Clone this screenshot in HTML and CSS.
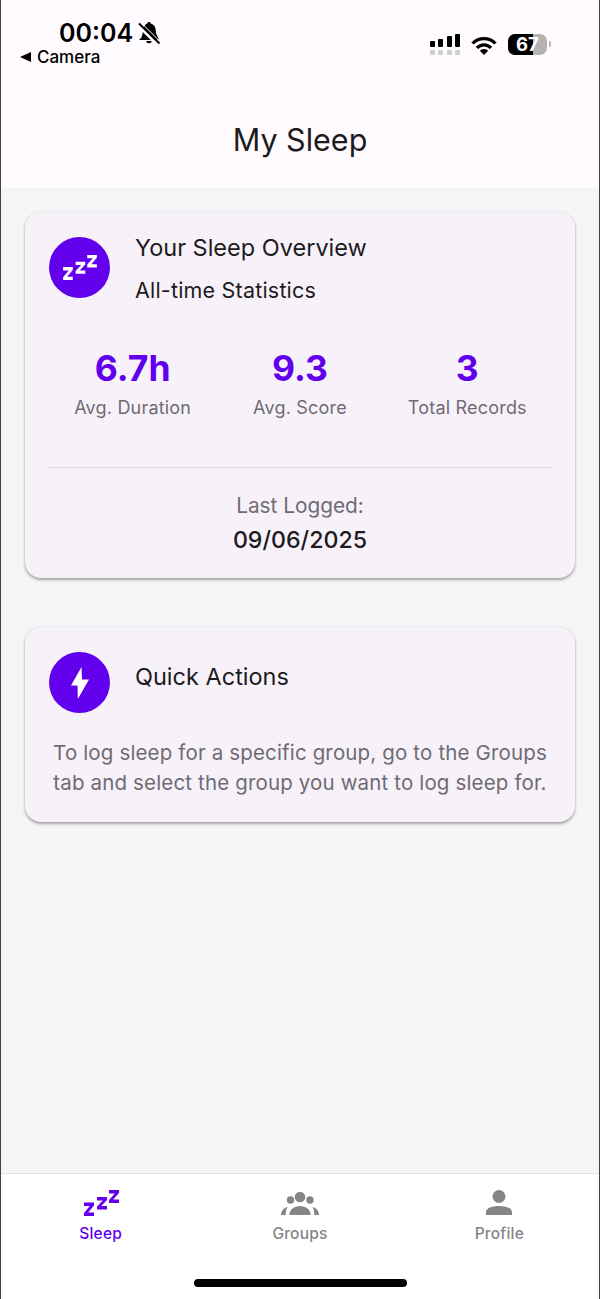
FILE: index.html
```html
<!DOCTYPE html>
<html lang="en">
<head>
<meta charset="utf-8">
<title>My Sleep</title>
<link rel="stylesheet" href="styles.css">
</head>
<body>
<div class="app">
  <header class="header">
    <div class="status">
      <div class="status-left">
        <div class="clock-row">
          <span class="clock">00:04</span>
          <svg class="bell" viewBox="0 0 24 24" width="24" height="24"><path fill="#000" d="M12 1c1 0 1.700.7 1.800 1.600 3 .8 4.700 3.200 4.900 6.400l.2 3 3 6.500H17L6.600 7.500c.5-2.400 1.900-4.400 3.600-4.900.1-.9.8-1.600 1.800-1.600zM5.700 11l8 8H2.200c.9-1 3.200-2.600 3.500-8zM9.200 20h5.600c-.3 1.400-1.400 2.300-2.800 2.300S9.500 21.400 9.200 20z"/><path stroke="#fffbfe" stroke-width="1" d="M3.500 1l20 20"/><path stroke="#000" stroke-width="2" d="M2 2.500l20.500 20"/></svg>
        </div>
        <div class="back-row"><span class="back-tri"></span><span class="back-label">Camera</span></div>
      </div>
      <div class="status-right">
        <div class="signal">
          <div class="bars"><i class="b1"></i><i class="b2"></i><i class="b3"></i><i class="b4"></i></div>
          <div class="dots"><i></i><i></i><i></i><i></i></div>
        </div>
        <svg class="wifi" viewBox="0 0 26 18" width="26" height="18"><g fill="none" stroke="#000" stroke-width="3.200"><path d="M1.500 6.500a16 16 0 0 1 23 0"/><path d="M6 11a9.500 9.500 0 0 1 14 0"/></g><path d="M13 18l-4.200-4.200a5.800 5.800 0 0 1 8.400 0z" fill="#000"/></svg>
        <div class="battery"><div class="battery-fill"></div><span class="battery-num">67</span></div>
        <span class="battery-cap"></span>
      </div>
    </div>
    <h1 class="title">My Sleep</h1>
  </header>

  <main class="main">
    <section class="card card-overview">
      <div class="card-head">
        <div class="avatar">
          <svg viewBox="0 0 38 28" width="37" height="27" fill="#fff"><path d="M2 13.500h10v3l-5.800 7h5.800v3.500H2v-3l5.800-7H2z"/><path d="M15 8h10v3l-5.800 6h5.800v3.500H15v-3l5.800-6H15z"/><path d="M27 1h10v3l-5.800 6.500h5.800V14H27v-3l5.800-6.500H27z"/></svg>
        </div>
        <div class="head-text">
          <h2 class="card-title">Your Sleep Overview</h2>
          <p class="card-sub">All-time Statistics</p>
        </div>
      </div>
      <div class="stats">
        <div class="stat"><div class="stat-value">6.7h</div><div class="stat-label">Avg. Duration</div></div>
        <div class="stat"><div class="stat-value">9.3</div><div class="stat-label">Avg. Score</div></div>
        <div class="stat"><div class="stat-value">3</div><div class="stat-label">Total Records</div></div>
      </div>
      <div class="last">
        <div class="last-label">Last Logged:</div>
        <div class="last-date">09/06/2025</div>
      </div>
    </section>

    <section class="card card-actions">
      <div class="card-head">
        <div class="avatar">
          <svg viewBox="0 0 20 34" width="20" height="34"><path fill="#fff" d="M11.500 1 1 19.500h6.500L7.800 33 19 13.500h-7z"/></svg>
        </div>
        <div class="head-text">
          <h2 class="card-title actions-title">Quick Actions</h2>
        </div>
      </div>
      <p class="actions-text">To log sleep for a specific group, go to the Groups tab and select the group you want to log sleep for.</p>
    </section>
  </main>

  <nav class="tabbar">
    <div class="tabs">
      <div class="tab tab-active">
        <svg viewBox="0 0 38 28" width="38" height="28" fill="#6200ee"><path d="M2 13.500h10v3l-5.800 7h5.800v3.500H2v-3l5.800-7H2z"/><path d="M15 8h10v3l-5.800 6h5.800v3.500H15v-3l5.800-6H15z"/><path d="M27 1h10v3l-5.800 6.500h5.800V14H27v-3l5.800-6.500H27z"/></svg>
        <span class="tab-label">Sleep</span>
      </div>
      <div class="tab">
        <svg viewBox="0 0 38 28" width="38" height="28" fill="#858585"><circle cx="19" cy="8" r="5.300"/><circle cx="9.500" cy="11" r="3.700"/><circle cx="29" cy="11" r="3.700"/><path d="M8.500 26c0-5.500 4.500-9 10.500-9s10.500 3.500 10.500 9z"/><path d="M0 26c0-4 2.500-7 6.500-8-1.200 2-1.800 4.800-1.800 8zM38 26c0-4-2.500-7-6.500-8 1.200 2 1.800 4.800 1.800 8z"/></svg>
        <span class="tab-label">Groups</span>
      </div>
      <div class="tab">
        <svg viewBox="0 0 38 28" width="38" height="28" fill="#858585"><circle cx="19" cy="7.500" r="6.500"/><path d="M6 26v-3c0-4 6-6 13-6s13 2 13 6v3z"/></svg>
        <span class="tab-label">Profile</span>
      </div>
    </div>
    <div class="home-bar"></div>
  </nav>
</div>
</body>
</html>
```

FILE: styles.css
```css
* { box-sizing: border-box; }
html, body { margin: 0; padding: 0; }
body { width: 600px; height: 1299px; overflow: hidden; font-family: Inter, "Liberation Sans", sans-serif; color: #1d1b20; background: #fff; }
h1, h2, p { margin: 0; font-weight: 400; }
.app { width: 600px; height: 1299px; display: flex; flex-direction: column; border-left: 1px solid #444; border-right: 1px solid #444; }

.header { height: 188px; background: #fffbfe; display: flex; flex-direction: column; flex: none; }
.status { height: 76px; display: flex; justify-content: space-between; padding: 19px 48px 0 19px; color: #000; }
.status-left { display: flex; flex-direction: column; }
.clock-row { display: flex; align-items: center; gap: 4px; padding-left: 39px; height: 28px; }
.clock { font-size: 25px; font-weight: 600; line-height: 28px; }
.back-row { display: flex; align-items: center; gap: 6px; height: 20px; }
.back-tri { width: 0; height: 0; border-style: solid; border-width: 5.500px 11px 5.500px 0; border-color: transparent #000 transparent transparent; }
.back-label { font-size: 17px; font-weight: 500; line-height: 20px; }
.status-right { display: flex; align-items: flex-start; padding-top: 15px; }
.signal { display: flex; flex-direction: column; gap: 3px; width: 30px; margin-right: 11px; }
.bars, .dots { display: flex; gap: 3.300px; align-items: flex-end; }
.bars i { display: block; width: 5px; background: #000; border-radius: 1px; }
.b1 { height: 6px; } .b2 { height: 8px; } .b3 { height: 11px; } .b4 { height: 13px; }
.dots i { display: block; width: 5px; height: 5px; background: #cfcfcf; border-radius: 1px; }
.wifi { margin: 3px 11px 0 0; }
.battery { width: 39px; height: 21px; border-radius: 7px; background: #b3b3b3; display: flex; align-items: center; justify-content: center; position: relative; }
.battery-fill { position: absolute; left: 0; top: 0; bottom: 0; width: 25px; background: #000; border-radius: 7px 0 0 7px; }
.battery-num { position: relative; color: #fff; font-size: 18.500px; font-weight: 700; line-height: 21px; }
.battery-cap { width: 2px; height: 6px; margin: 7px 0 0 2px; background: #b3b3b3; border-radius: 0 2px 2px 0; }
.title { font-size: 30.500px; line-height: 38px; text-align: center; margin-top: 45px; color: #1d1b20; }

.main { flex: 1; background: #f5f5f5; padding: 24px 24px 0; display: flex; flex-direction: column; gap: 49px; }
.card { background: #f7f2fa; border-radius: 16px; box-shadow: 0 2px 3px rgba(0,0,0,.32), 0 0 2px rgba(0,0,0,.1); padding: 25px 24px; }
.card-overview { height: 366px; }
.card-actions { height: 195px; }
.card-head { display: flex; gap: 25px; }
.avatar { width: 61px; height: 61px; border-radius: 50%; background: #6200ee; display: flex; align-items: center; justify-content: center; flex: none; }
.card-title { font-size: 23.500px; line-height: 28px; color: #1d1b20; margin-top: -3px; }
.actions-title { margin-top: 11px; }
.card-sub { font-size: 21.500px; line-height: 26px; margin-top: 15px; letter-spacing: .2px; }
.stats { display: flex; justify-content: space-between; margin: 45px 0 0; }
.stat { flex: 1; text-align: center; }
.stat-value { font-size: 35.500px; font-weight: 700; line-height: 42px; color: #6200ee; }
.stat-label { font-size: 18px; line-height: 24px; color: #6f6b73; margin-top: 6px; letter-spacing: .2px; }
.last { margin-top: 47px; border-top: 1px solid #dcd8df; padding-top: 25px; text-align: center; }
.last-label { font-size: 20.800px; line-height: 26px; color: #6f6b73; }
.last-date { font-size: 23.200px; line-height: 30px; margin-top: 6px; font-weight: 500; }
.actions-text { font-size: 20.500px; line-height: 30px; color: #6f6b73; text-align: center; margin-top: 25px; letter-spacing: .15px; }

.tabbar { height: 126px; background: #fff; border-top: 1px solid #e3e3e3; flex: none; display: flex; flex-direction: column; align-items: center; }
.tabs { display: flex; width: 100%; padding-top: 15px; }
.tab { flex: 1; display: flex; flex-direction: column; align-items: center; gap: 7px; color: #858585; }
.tab-active { color: #6200ee; }
.tab-label { font-size: 15.500px; font-weight: 500; line-height: 20px; letter-spacing: .2px; }
.home-bar { width: 213px; height: 8px; background: #000; border-radius: 4px; margin-top: 35px; }
```
